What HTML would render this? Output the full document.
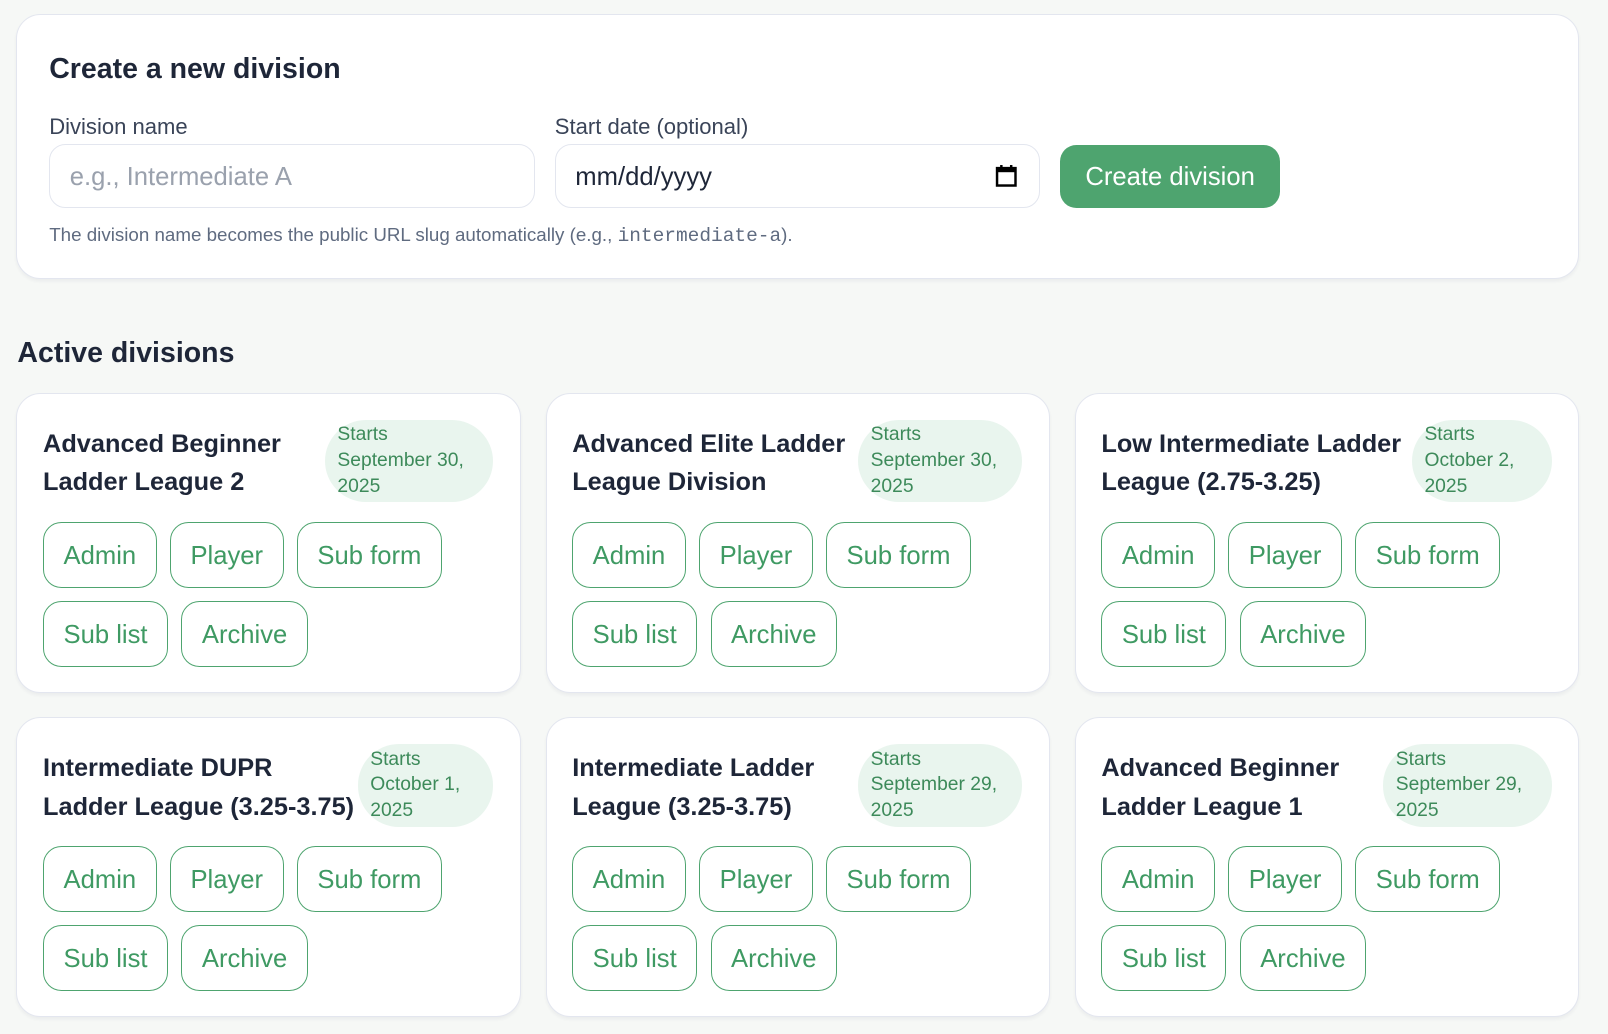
<!DOCTYPE html>
<html><head><meta charset="utf-8"><style>
html,body{margin:0;padding:0;background:#f6f8f6;}
body{width:1608px;height:1034px;overflow:hidden;font-family:"Liberation Sans",Arial,sans-serif;}
#w{position:relative;width:1568px;height:1008px;zoom:1.02551;}
.box{position:absolute;background:#fff;border:1.5px solid #e3e6ef;border-radius:24px;box-sizing:border-box;box-shadow:0 2px 3px rgba(30,40,80,0.05);}
.h{position:absolute;font-weight:bold;font-size:27.8px;color:#1e2638;margin:0;}
.lbl{position:absolute;font-size:21.5px;color:#3a4458;}
.inp{position:absolute;height:63px;border:1.5px solid #e3e6ef;border-radius:16px;box-sizing:border-box;font-size:25px;line-height:63px;padding-left:19px;}
.btn{position:absolute;left:1034px;top:141px;width:214px;height:62px;background:#4ea46f;border-radius:16px;color:#fff;font-size:25px;line-height:64px;text-align:center;}
.help{position:absolute;left:48px;top:218px;font-size:18.3px;color:#5f6b80;}
.help code{font-family:"Liberation Mono",monospace;font-size:19px;}
.card{position:absolute;width:492px;height:293px;padding:26px 26px 0 25px;}
.hd{display:flex;justify-content:space-between;align-items:flex-start;}
.t{font-weight:bold;font-size:24.7px;line-height:38px;color:#1e2638;margin-top:4px;white-space:nowrap;}
.pill{background:#e9f5ee;border-radius:40px;color:#3d8a5a;font-size:18.8px;line-height:25px;padding:2px 12px 3px;box-sizing:border-box;flex:none;white-space:nowrap;}
.bs{display:flex;flex-wrap:wrap;gap:13px 13px;margin-top:19px;width:430px;}
.b{height:64px;border:1.5px solid #4ea46f;border-radius:18px;box-sizing:border-box;color:#3f9a63;font-size:25px;line-height:65px;padding:0 19px;}
</style></head><body><div id="w">
<div class="box" style="left:16px;top:14px;width:1524px;height:258px;"></div>
<div class="h" style="left:48px;top:52px;">Create a new division</div>
<div class="lbl" style="left:48px;top:111px;">Division name</div>
<div class="inp" style="left:48px;top:140px;width:474px;color:#9aa1ad;">e.g., Intermediate A</div>
<div class="lbl" style="left:541px;top:111px;">Start date (optional)</div>
<div class="inp" style="left:541px;top:140px;width:473px;color:#1e2638;">mm/dd/yyyy
<svg style="position:absolute;left:428px;top:19px" width="22" height="24" viewBox="0 0 22 24"><rect x="2" y="4" width="18" height="17" fill="none" stroke="#000" stroke-width="2.4"/><rect x="2" y="4" width="18" height="4" fill="#000"/><rect x="5" y="1" width="2.4" height="4" fill="#000"/><rect x="14.6" y="1" width="2.4" height="4" fill="#000"/></svg></div>
<div class="btn">Create division</div>
<div class="help">The division name becomes the public URL slug automatically (e.g., <code>intermediate-a</code>).</div>
<div class="h" style="left:17px;top:329px;">Active divisions</div>

<div class="box card" style="left:16px;top:383px;"><div class="hd"><div class="t">Advanced Beginner<br>Ladder League 2</div><div class="pill" style="width:164px">Starts<br>September 30,<br>2025</div></div>
<div class="bs"><span class="b">Admin</span><span class="b">Player</span><span class="b">Sub form</span><span class="b">Sub list</span><span class="b">Archive</span></div></div>

<div class="box card" style="left:532px;top:383px;"><div class="hd"><div class="t">Advanced Elite Ladder<br>League Division</div><div class="pill" style="width:160px">Starts<br>September 30,<br>2025</div></div>
<div class="bs"><span class="b">Admin</span><span class="b">Player</span><span class="b">Sub form</span><span class="b">Sub list</span><span class="b">Archive</span></div></div>

<div class="box card" style="left:1048px;top:383px;"><div class="hd"><div class="t">Low Intermediate Ladder<br>League (2.75-3.25)</div><div class="pill" style="width:136px">Starts<br>October 2,<br>2025</div></div>
<div class="bs"><span class="b">Admin</span><span class="b">Player</span><span class="b">Sub form</span><span class="b">Sub list</span><span class="b">Archive</span></div></div>

<div class="box card" style="left:16px;top:699px;"><div class="hd"><div class="t">Intermediate DUPR<br>Ladder League (3.25-3.75)</div><div class="pill" style="width:132px">Starts<br>October 1,<br>2025</div></div>
<div class="bs"><span class="b">Admin</span><span class="b">Player</span><span class="b">Sub form</span><span class="b">Sub list</span><span class="b">Archive</span></div></div>

<div class="box card" style="left:532px;top:699px;"><div class="hd"><div class="t">Intermediate Ladder<br>League (3.25-3.75)</div><div class="pill" style="width:160px">Starts<br>September 29,<br>2025</div></div>
<div class="bs"><span class="b">Admin</span><span class="b">Player</span><span class="b">Sub form</span><span class="b">Sub list</span><span class="b">Archive</span></div></div>

<div class="box card" style="left:1048px;top:699px;"><div class="hd"><div class="t">Advanced Beginner<br>Ladder League 1</div><div class="pill" style="width:164px">Starts<br>September 29,<br>2025</div></div>
<div class="bs"><span class="b">Admin</span><span class="b">Player</span><span class="b">Sub form</span><span class="b">Sub list</span><span class="b">Archive</span></div></div>
</div></body></html>
